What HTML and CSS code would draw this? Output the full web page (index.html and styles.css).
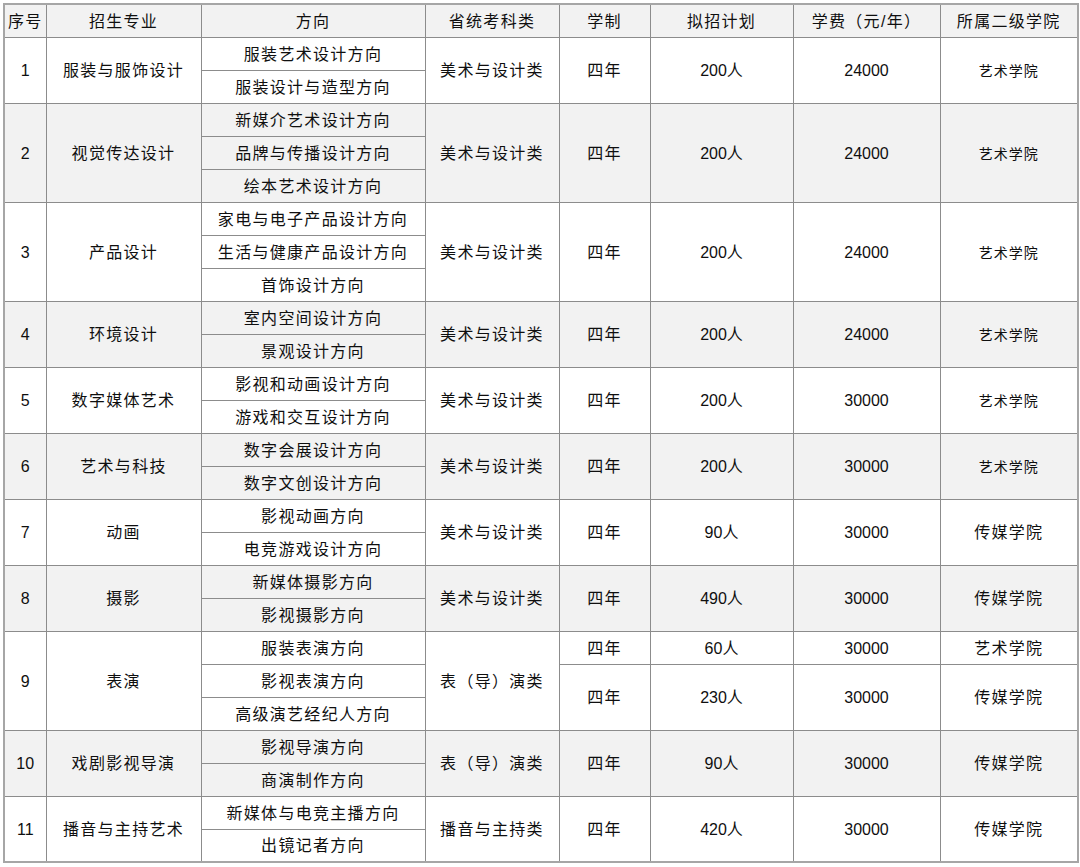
FILE: index.html
```html
<!DOCTYPE html>
<html lang="zh-CN">
<head>
<meta charset="utf-8">
<title>招生专业</title>
<link rel="stylesheet" href="styles.css">
</head>
<body>
<div class="wrap">
<table class="plan">
  <colgroup>
    <col class="c1"><col class="c2"><col class="c3"><col class="c4"><col class="c5"><col class="c6"><col class="c7"><col class="c8">
  </colgroup>
  <thead>
    <tr class="shade">
      <th>序号</th><th>招生专业</th><th>方向</th><th>省统考科类</th><th>学制</th><th>拟招计划</th><th>学费（元/年）</th><th>所属二级学院</th>
    </tr>
  </thead>
  <tbody>
    <tr><td rowspan="2" class="num">1</td><td rowspan="2">服装与服饰设计</td><td>服装艺术设计方向</td><td rowspan="2">美术与设计类</td><td rowspan="2">四年</td><td rowspan="2" class="num">200人</td><td rowspan="2" class="num">24000</td><td rowspan="2" class="small">艺术学院</td></tr>
    <tr><td>服装设计与造型方向</td></tr>

    <tr class="shade"><td rowspan="3" class="num">2</td><td rowspan="3">视觉传达设计</td><td>新媒介艺术设计方向</td><td rowspan="3">美术与设计类</td><td rowspan="3">四年</td><td rowspan="3" class="num">200人</td><td rowspan="3" class="num">24000</td><td rowspan="3" class="small">艺术学院</td></tr>
    <tr class="shade"><td>品牌与传播设计方向</td></tr>
    <tr class="shade"><td>绘本艺术设计方向</td></tr>

    <tr><td rowspan="3" class="num">3</td><td rowspan="3">产品设计</td><td>家电与电子产品设计方向</td><td rowspan="3">美术与设计类</td><td rowspan="3">四年</td><td rowspan="3" class="num">200人</td><td rowspan="3" class="num">24000</td><td rowspan="3" class="small">艺术学院</td></tr>
    <tr><td>生活与健康产品设计方向</td></tr>
    <tr><td>首饰设计方向</td></tr>

    <tr class="shade"><td rowspan="2" class="num">4</td><td rowspan="2">环境设计</td><td>室内空间设计方向</td><td rowspan="2">美术与设计类</td><td rowspan="2">四年</td><td rowspan="2" class="num">200人</td><td rowspan="2" class="num">24000</td><td rowspan="2" class="small">艺术学院</td></tr>
    <tr class="shade"><td>景观设计方向</td></tr>

    <tr><td rowspan="2" class="num">5</td><td rowspan="2">数字媒体艺术</td><td>影视和动画设计方向</td><td rowspan="2">美术与设计类</td><td rowspan="2">四年</td><td rowspan="2" class="num">200人</td><td rowspan="2" class="num">30000</td><td rowspan="2" class="small">艺术学院</td></tr>
    <tr><td>游戏和交互设计方向</td></tr>

    <tr class="shade"><td rowspan="2" class="num">6</td><td rowspan="2">艺术与科技</td><td>数字会展设计方向</td><td rowspan="2">美术与设计类</td><td rowspan="2">四年</td><td rowspan="2" class="num">200人</td><td rowspan="2" class="num">30000</td><td rowspan="2" class="small">艺术学院</td></tr>
    <tr class="shade"><td>数字文创设计方向</td></tr>

    <tr><td rowspan="2" class="num">7</td><td rowspan="2">动画</td><td>影视动画方向</td><td rowspan="2">美术与设计类</td><td rowspan="2">四年</td><td rowspan="2" class="num">90人</td><td rowspan="2" class="num">30000</td><td rowspan="2">传媒学院</td></tr>
    <tr><td>电竞游戏设计方向</td></tr>

    <tr class="shade"><td rowspan="2" class="num">8</td><td rowspan="2">摄影</td><td>新媒体摄影方向</td><td rowspan="2">美术与设计类</td><td rowspan="2">四年</td><td rowspan="2" class="num">490人</td><td rowspan="2" class="num">30000</td><td rowspan="2">传媒学院</td></tr>
    <tr class="shade"><td>影视摄影方向</td></tr>

    <tr><td rowspan="3" class="num">9</td><td rowspan="3">表演</td><td>服装表演方向</td><td rowspan="3">表（导）演类</td><td>四年</td><td class="num">60人</td><td class="num">30000</td><td>艺术学院</td></tr>
    <tr><td>影视表演方向</td><td rowspan="2">四年</td><td rowspan="2" class="num">230人</td><td rowspan="2" class="num">30000</td><td rowspan="2">传媒学院</td></tr>
    <tr><td>高级演艺经纪人方向</td></tr>

    <tr class="shade"><td rowspan="2" class="num">10</td><td rowspan="2">戏剧影视导演</td><td>影视导演方向</td><td rowspan="2">表（导）演类</td><td rowspan="2">四年</td><td rowspan="2" class="num">90人</td><td rowspan="2" class="num">30000</td><td rowspan="2">传媒学院</td></tr>
    <tr class="shade"><td>商演制作方向</td></tr>

    <tr><td rowspan="2" class="num">11</td><td rowspan="2">播音与主持艺术</td><td>新媒体与电竞主播方向</td><td rowspan="2">播音与主持类</td><td rowspan="2">四年</td><td rowspan="2" class="num">420人</td><td rowspan="2" class="num">30000</td><td rowspan="2">传媒学院</td></tr>
    <tr><td>出镜记者方向</td></tr>
  </tbody>
</table>
</div>
</body>
</html>
```

FILE: styles.css
```css
html, body {
  margin: 0;
  padding: 0;
  background: #ffffff;
}

.wrap {
  padding: 3px 3px 0 3px;
}

.plan {
  border-collapse: collapse;
  table-layout: fixed;
  width: 1074px;
  font-family: "Liberation Sans", "Noto Sans CJK SC", sans-serif;
  font-size: 16px;
  color: #0f0f0f;
  border: 2px solid #a6a6a6;
}

.c1 { width: 42px; }
.c2 { width: 155px; }
.c3 { width: 224px; }
.c4 { width: 134px; }
.c5 { width: 91px; }
.c6 { width: 143px; }
.c7 { width: 147px; }
.c8 { width: 138px; }

.plan tr {
  height: 33px;
}

.plan th,
.plan td {
  border: 1px solid #8c8c8c;
  padding: 2px 0 0 0;
  text-align: center;
  vertical-align: middle;
  font-weight: normal;
  letter-spacing: 1.3px;
  line-height: 20px;
  white-space: nowrap;
}

.plan .shade {
  background: #f2f2f2;
}

.plan .num {
  letter-spacing: 0;
}

.plan .small {
  font-size: 14px;
  letter-spacing: 1px;
}
```
